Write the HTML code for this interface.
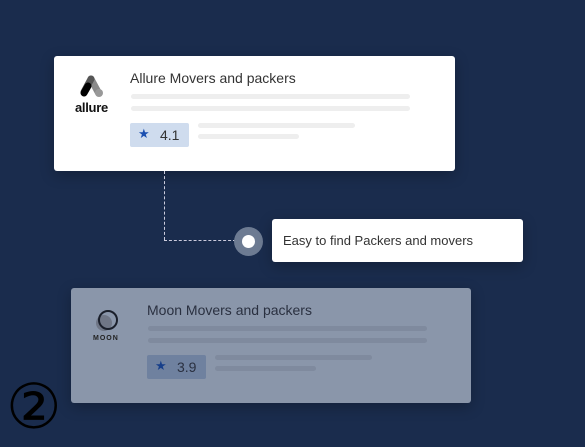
<!DOCTYPE html><html><head><style>
body{margin:0;width:585px;height:447px;background:#1a2c4d;position:relative;overflow:hidden;font-family:"Liberation Sans",sans-serif}
.a{position:absolute}
.card{border-radius:3px;box-shadow:0 4px 14px rgba(0,0,0,.25)}
.bar{position:absolute;height:5px;border-radius:3px}
</style></head><body>
<div class="a card" style="left:54px;top:56px;width:401px;height:115px;background:#fff"></div>
<svg class="a" style="left:78px;top:74px" width="28" height="26" viewBox="0 0 28 26">
<line x1="13" y1="5" x2="20" y2="18" stroke="#8a8a8a" stroke-width="7" stroke-linecap="round"/>
<line x1="13" y1="5" x2="6" y2="18" stroke="#555" stroke-width="7" stroke-linecap="round"/>
<line x1="10" y1="12" x2="6" y2="19" stroke="#000" stroke-width="7" stroke-linecap="round"/>
<circle cx="21" cy="19" r="4" fill="#999"/></svg>
<div class="a" style="left:75px;top:100px;font-size:13px;font-weight:bold;color:#111;letter-spacing:-.3px">allure</div>
<div class="a" style="left:130px;top:70px;font-size:14px;color:#333">Allure Movers and packers</div>
<div class="bar" style="left:131px;top:94px;width:279px;background:#eee"></div>
<div class="bar" style="left:131px;top:106px;width:279px;background:#eee"></div>
<div class="a" style="left:130px;top:123px;width:59px;height:24px;background:#cfdcee;border-radius:2px"></div>
<div class="a" style="left:138px;top:126px;font-size:13px;color:#1b4fb0">★</div>
<div class="a" style="left:160px;top:127px;font-size:14px;color:#333">4.1</div>
<div class="bar" style="left:198px;top:123px;width:157px;background:#eee"></div>
<div class="bar" style="left:198px;top:134px;width:101px;background:#eee"></div>

<div class="a" style="left:164px;top:171px;width:0;height:69px;border-left:1px dashed #ccd"></div>
<div class="a" style="left:164px;top:240px;width:72px;height:0;border-top:1px dashed #ccd"></div>
<div class="a" style="left:234px;top:227px;width:29px;height:29px;border-radius:50%;background:#6d7b92"></div>
<div class="a" style="left:242px;top:235px;width:13px;height:13px;border-radius:50%;background:#fff"></div>
<div class="a card" style="left:272px;top:219px;width:251px;height:43px;background:#fff"></div>
<div class="a" style="left:283px;top:233px;font-size:13px;color:#333">Easy to find Packers and movers</div>

<div class="a card" style="left:71px;top:288px;width:400px;height:115px;background:#8a96aa"></div>
<svg class="a" style="left:92px;top:307px" width="30" height="26"><circle cx="12" cy="16" r="8" fill="#6f7686"/><circle cx="16" cy="13" r="9" fill="none" stroke="#1a1f2b" stroke-width="2"/></svg>
<div class="a" style="left:93px;top:335px;font-size:7px;font-weight:bold;letter-spacing:1px;color:#222">MOON</div>
<div class="a" style="left:147px;top:302px;font-size:14px;color:#2a3040">Moon Movers and packers</div>
<div class="bar" style="left:148px;top:326px;width:279px;background:#7f8a9e"></div>
<div class="bar" style="left:148px;top:338px;width:279px;background:#7f8a9e"></div>
<div class="a" style="left:147px;top:355px;width:59px;height:24px;background:#6f819f;border-radius:2px"></div>
<div class="a" style="left:155px;top:358px;font-size:13px;color:#173f8a">★</div>
<div class="a" style="left:177px;top:359px;font-size:14px;color:#2a3040">3.9</div>
<div class="bar" style="left:215px;top:355px;width:157px;background:#7f8a9e"></div>
<div class="bar" style="left:215px;top:366px;width:101px;background:#7f8a9e"></div>

<div class="a" style="left:6px;top:370px;font-size:62px;line-height:74px;color:#000;font-family:'DejaVu Sans',sans-serif">②</div>
</body></html>
